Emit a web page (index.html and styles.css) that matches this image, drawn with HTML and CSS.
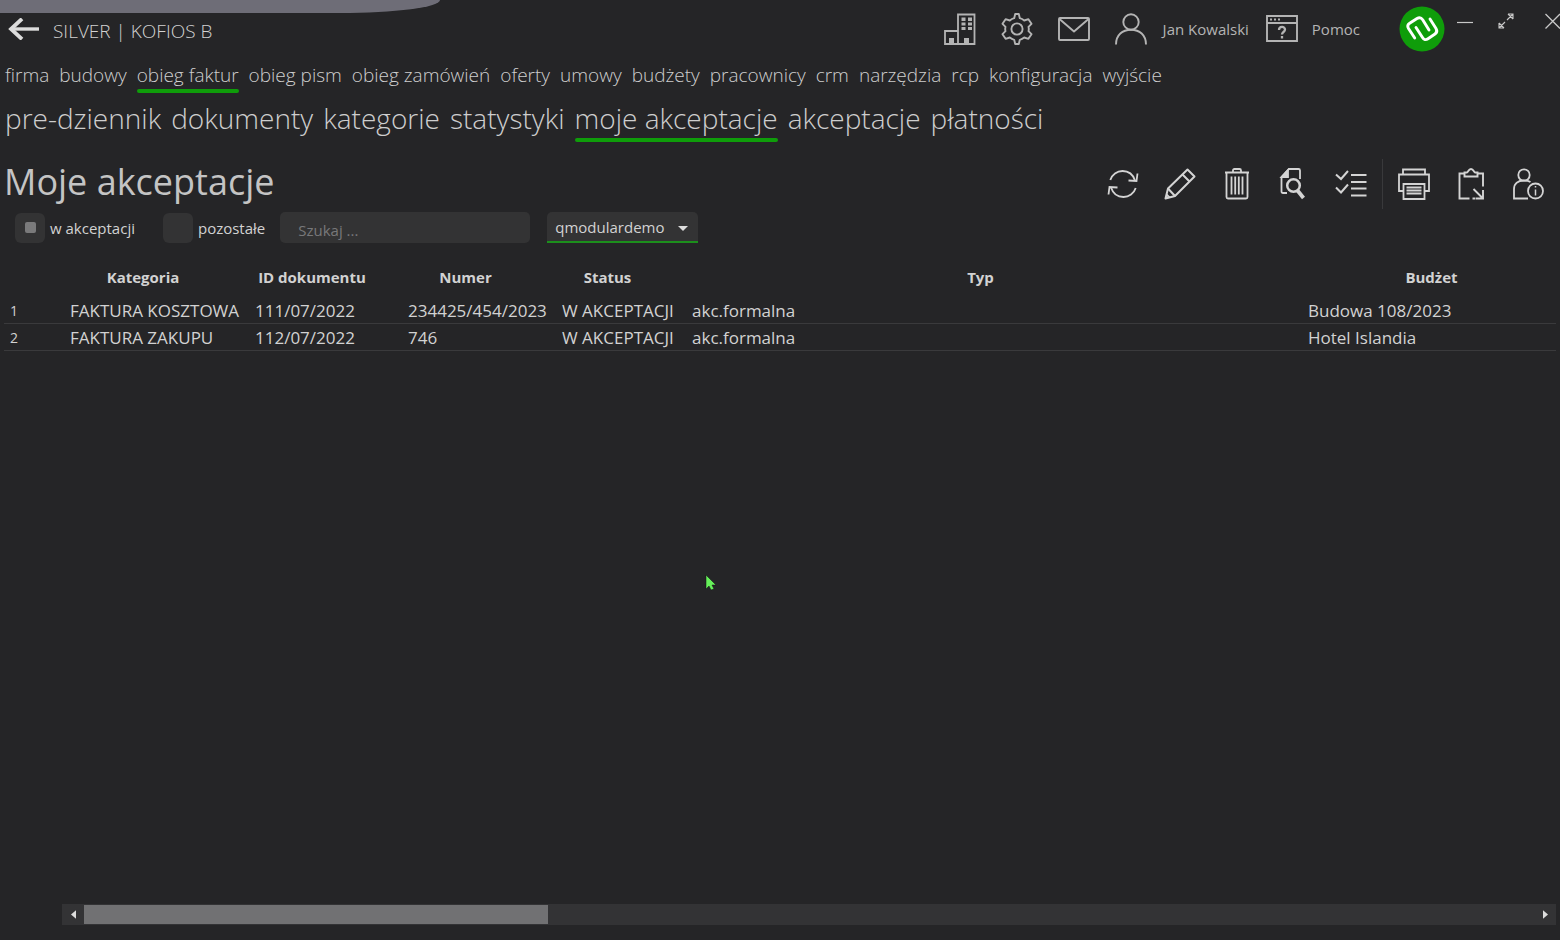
FILE: index.html
```html
<!DOCTYPE html>
<html lang="pl">
<head>
    <meta charset="UTF-8">
    <meta name="viewport" content="width=device-width, initial-scale=1.0">
    <title>Moje akceptacje</title>
    <link rel="stylesheet" href="styles.css">
</head>
<body>
    <div class="window-tab"></div>

    <!-- górny pasek -->
    <header class="topbar">
        <button class="icon-button back" aria-label="Wstecz">
            <svg width="32" height="22" viewBox="0 0 32 22" fill="none" stroke="#dcdcdc" stroke-width="3.4"><path d="M31 11H3"/><path d="M14 0.8L3 11L14 21.2" stroke-width="3.8"/></svg>
        </button>
        <div class="company">SILVER | KOFIOS B</div>
        <div class="top-actions">
            <button class="icon-button" aria-label="Firma">
                <svg width="32" height="32" viewBox="0 0 32 32" fill="none" stroke="#b4b4b4" stroke-width="1.8"><path d="M14 31V1.5h16.5V31H1V18h13M1 31h30"/><path d="M17.5 4.5h4v3.5h-4zM24 4.5h4v3.5h-4zM17.5 9.5h4v3h-4zM24 9.5h4v3h-4zM17.5 14h4v3h-4zM24 14h4v3h-4zM5 25h5v5.5H5zM20 25h5v5.5h-5z" fill="#b4b4b4" stroke="none"/></svg>
            </button>
            <button class="icon-button" aria-label="Ustawienia">
                <svg width="32" height="32" viewBox="0 0 32 32" fill="none" stroke="#b4b4b4" stroke-width="1.9" stroke-linejoin="round"><circle cx="16" cy="16" r="5.6"/><path d="M14.2 1h3.6l1 4.2c1.7.4 3.1 1.2 4.4 2.3l4.2-1.3 3.1 4.6-3 3c.4 1.5.4 2.9 0 4.4l3 3-3.1 4.6-4.2-1.3c-1.3 1.1-2.7 1.9-4.4 2.3l-1 4.2h-3.6l-1-4.2c-1.7-.4-3.1-1.2-4.4-2.3l-4.2 1.3-3.1-4.6 3-3c-.4-1.5-.4-2.9 0-4.4l-3-3 3.1-4.6 4.2 1.3c1.3-1.1 2.7-1.9 4.4-2.3z"/></svg>
            </button>
            <button class="icon-button" aria-label="Wiadomości">
                <svg width="32" height="32" viewBox="0 0 32 32" fill="none" stroke="#b4b4b4" stroke-width="1.9" stroke-linejoin="round"><rect x="1" y="5" width="30" height="22" rx="1"/><path d="M1.5 6L16 18.5 30.5 6"/></svg>
            </button>
            <button class="icon-button user">
                <svg width="32" height="32" viewBox="0 0 32 32" fill="none" stroke="#b4b4b4" stroke-width="1.9"><circle cx="16" cy="9" r="7.7"/><path d="M1 31.5C1 22 7.5 16.7 16 16.7S31 22 31 31.5"/></svg>
                <span>Jan Kowalski</span>
            </button>
            <button class="icon-button help">
                <svg width="32" height="32" viewBox="0 0 32 32" fill="none" stroke="#b4b4b4" stroke-width="1.9"><path d="M1 3h30v25H1zM1 10h30"/><path d="M4 6.5h2M8 6.5h2M12 6.5h2" stroke-width="2"/><path d="M13 17c0-4 6-4 6-.5 0 2.5-3 2.5-3 5M16 23v2.5" stroke-width="2.3"/></svg>
                <span>Pomoc</span>
            </button>
        </div>
        <svg class="logo" width="46" height="46" viewBox="0 0 46 46" fill="none" stroke="#fff" stroke-width="2.9" stroke-linecap="round" stroke-linejoin="round"><circle cx="23" cy="23" r="22.5" fill="#0f9d0a" stroke="none"/><path d="M15.7 32L9.5 22.5Q7.5 19 11 17L18 12.5Q21.5 10.5 23.7 13.7L30 24"/><path d="M17 21.5L23.5 31.5Q25.5 35 29 32.7L36 28Q39 26 37 22.5L31 13"/></svg>
        <div class="window-controls">
            <button class="icon-button" aria-label="Minimalizuj">
                <svg width="16" height="16" viewBox="0 0 16 16" stroke="#c8c8c8" stroke-width="1.2"><path d="M0 9.5h16"/></svg>
            </button>
            <button class="icon-button" aria-label="Przywróć">
                <svg width="16" height="16" viewBox="0 0 16 16" fill="none" stroke="#c8c8c8" stroke-width="1.1"><path d="M10 1h5v5M15 1L9 7M1 10v5h5M1 15l6-6M10 1l5 5M1 10l5 5"/></svg>
            </button>
            <button class="icon-button" aria-label="Zamknij">
                <svg width="16" height="16" viewBox="0 0 16 16" stroke="#c8c8c8" stroke-width="1.3"><path d="M1.5 1L16 15.5M16 1L1.5 15.5"/></svg>
            </button>
        </div>
    </header>

    <!-- menu główne -->
    <nav class="menu">
        <a href="#">firma</a>
        <a href="#">budowy</a>
        <a href="#" class="active">obieg faktur</a>
        <a href="#">obieg pism</a>
        <a href="#">obieg zamówień</a>
        <a href="#">oferty</a>
        <a href="#">umowy</a>
        <a href="#">budżety</a>
        <a href="#">pracownicy</a>
        <a href="#">crm</a>
        <a href="#">narzędzia</a>
        <a href="#">rcp</a>
        <a href="#">konfiguracja</a>
        <a href="#">wyjście</a>
    </nav>
    <nav class="menu submenu">
        <a href="#">pre-dziennik</a>
        <a href="#">dokumenty</a>
        <a href="#">kategorie</a>
        <a href="#">statystyki</a>
        <a href="#" class="active">moje akceptacje</a>
        <a href="#">akceptacje</a>
        <a href="#">płatności</a>
    </nav>

    <div class="title-row">
        <h1>Moje akceptacje</h1>
        <div class="toolbar">
            <button class="icon-button" aria-label="Odśwież">
                <svg width="32" height="32" viewBox="0 0 32 32" fill="none" stroke="#d4d4d4" stroke-width="1.8"><path d="M3.3 12C5 6.5 10 3 15.5 3c6 0 10.5 3.5 12.5 9.5M28.7 20C27 25.5 22 29 16.5 29c-6 0-10.5-3.5-12.5-9.5"/><path d="M21.5 12.5l8 .5 1-7.5M10.5 19.5l-8-.5-1 7.5"/></svg>
            </button>
            <button class="icon-button" aria-label="Edytuj">
                <svg width="32" height="32" viewBox="0 0 32 32" fill="none" stroke="#d4d4d4" stroke-width="2" stroke-linejoin="round"><path d="M1.5 30.5L4 20.5 23.5 1.5l7 7L11 28z"/><path d="M4 20.5l7 7.5M18.5 6.5l7 7M2.5 26.5l3 3"/></svg>
            </button>
            <button class="icon-button" aria-label="Usuń">
                <svg width="32" height="32" viewBox="0 0 32 32" fill="none" stroke="#d4d4d4" stroke-width="1.8"><path d="M4 4.5h24M12 4V2.5c0-1 .5-1.5 1.5-1.5h5c1 0 1.5.5 1.5 1.5V4M5.5 5v24c0 1 .5 1.5 1.5 1.5h18c1 0 1.5-.5 1.5-1.5V5M10.5 8.5v18M14.2 8.5v18M17.8 8.5v18M21.5 8.5v18"/></svg>
            </button>
            <button class="icon-button" aria-label="Podgląd">
                <svg width="32" height="32" viewBox="0 0 32 32" fill="none" stroke="#d4d4d4" stroke-width="1.8"><path d="M9 25H5c-1 0-1.5-.5-1.5-1.5V9L11 1h9.5c1 0 1.5.5 1.5 1.5V11"/><path d="M3.5 9H10V2z" fill="#d4d4d4"/><circle cx="15.5" cy="17.5" r="6.3" stroke-width="2.5"/><path d="M19.5 22.5l6 7.5" stroke-width="3.8"/></svg>
            </button>
            <button class="icon-button" aria-label="Akceptuj">
                <svg width="32" height="32" viewBox="0 0 32 32" fill="none" stroke="#d4d4d4" stroke-width="2"><path d="M1 6.5l5 4.5 7-8M1 19.5l5 5 7-8M16 7h15.5M16 14h15.5M16 20.5h15.5M16 27.5h15.5"/></svg>
            </button>
            <span class="separator"></span>
            <button class="icon-button" aria-label="Drukuj">
                <svg width="32" height="32" viewBox="0 0 32 32" fill="none" stroke="#d4d4d4" stroke-width="1.8"><path d="M5 6.5V1.5h22v5M5 23H1V6.5h30V23h-4"/><path d="M5.5 16h21v15h-21zM8.5 19.5h15M8.5 22.5h15M8.5 25.5h15"/></svg>
            </button>
            <button class="icon-button" aria-label="Schowek">
                <svg width="32" height="32" viewBox="0 0 32 32" fill="none" stroke="#d4d4d4" stroke-width="1.9"><path d="M9 5.5H4.5v25h10M17.5 30.5H20M23 5.5h5v13"/><path d="M9.5 8.5V4.5H12c1 0 1.500-3.500 4-3.500s3 3.500 4 3.500h2.500v4z"/><path d="M18.5 21l8.5 8.500M28 22v8.500h-7.500"/></svg>
            </button>
            <button class="icon-button" aria-label="Informacje o użytkowniku">
                <svg width="32" height="32" viewBox="0 0 32 32" fill="none" stroke="#d4d4d4" stroke-width="1.8"><circle cx="12" cy="7" r="5.7"/><path d="M16 30.5H2V21c0-5.500 4-8.500 10-8.500 2.500 0 5 .5 6.500 1.500"/><circle cx="23.5" cy="23" r="7.5"/><path d="M23.5 21.5v6M23.5 18v1.5" stroke-width="1.5"/></svg>
            </button>
        </div>
    </div>

    <form class="filters">
        <label class="check"><input type="checkbox" checked>w akceptacji</label>
        <label class="check"><input type="checkbox">pozostałe</label>
        <input class="search" type="text" placeholder="Szukaj ..." aria-label="Szukaj">
        <div class="select-box">
            <select aria-label="Użytkownik">
                <option>qmodulardemo</option>
            </select>
        </div>
    </form>

    <main class="grid">
        <table>
            <colgroup>
                <col class="col-lp">
                <col class="col-kategoria">
                <col class="col-id">
                <col class="col-numer">
                <col class="col-status">
                <col class="col-typ">
                <col class="col-budzet">
            </colgroup>
            <thead>
                <tr>
                    <th></th>
                    <th>Kategoria</th>
                    <th>ID dokumentu</th>
                    <th>Numer</th>
                    <th>Status</th>
                    <th>Typ</th>
                    <th>Budżet</th>
                </tr>
            </thead>
            <tbody>
                <tr>
                    <td class="lp">1</td>
                    <td>FAKTURA KOSZTOWA</td>
                    <td>111/07/2022</td>
                    <td>234425/454/2023</td>
                    <td>W AKCEPTACJI</td>
                    <td>akc.formalna</td>
                    <td>Budowa 108/2023</td>
                </tr>
                <tr>
                    <td class="lp">2</td>
                    <td>FAKTURA ZAKUPU</td>
                    <td>112/07/2022</td>
                    <td>746</td>
                    <td>W AKCEPTACJI</td>
                    <td>akc.formalna</td>
                    <td>Hotel Islandia</td>
                </tr>
            </tbody>
        </table>
    </main>

    <div class="scrollbar">
        <button class="scroll-arrow" aria-label="Przewiń w lewo"><svg width="5" height="9" viewBox="0 0 6 10"><path d="M6 0v10L0 5z" fill="#dcdcdc"/></svg></button>
        <div class="scroll-track"><div class="scroll-thumb"></div></div>
        <button class="scroll-arrow" aria-label="Przewiń w prawo"><svg width="5" height="9" viewBox="0 0 6 10"><path d="M0 0v10l6-5z" fill="#dcdcdc"/></svg></button>
    </div>

    <svg class="cursor" width="12" height="18" viewBox="0 0 12 18"><path d="M1 1v14l3-3 2 4 3-1-2-4h4z" fill="#66f05a" stroke="#111" stroke-width="0.5"/></svg>
</body>
</html>
```
FILE: styles.css
```css
* {
    box-sizing: border-box;
}
body {
    margin: 0;
    min-height: 100vh;
    display: flex;
    flex-direction: column;
    position: relative;
    overflow-x: hidden;
    background: #252527;
    color: #d2d2d2;
    font-family: "Open Sans", "Noto Sans", sans-serif;
    font-size: 16px;
}
button, input, select {
    font: inherit;
    color: inherit;
}
.window-tab {
    position: absolute;
    top: 0;
    left: 0;
    width: 440px;
    height: 13px;
    background: #6e6d77;
    border-bottom-right-radius: 100px 13px;
}

/* topbar */
.topbar {
    display: flex;
    align-items: center;
    height: 57px;
    padding-left: 8px;
}
.icon-button {
    display: flex;
    align-items: center;
    padding: 0;
    border: none;
    background: none;
    color: #b4b4b4;
    cursor: pointer;
}
.icon-button svg {
    display: block;
}
.company {
    margin-left: 13px;
    padding-top: 4px;
    font-size: 19px;
    font-weight: 300;
    white-space: nowrap;
}
.top-actions {
    display: flex;
    align-items: center;
    gap: 25px;
    margin-left: auto;
}
.user,
.help {
    font-size: 15px;
    white-space: nowrap;
}
.user {
    gap: 16px;
}
.help {
    gap: 14px;
    margin-left: -8px;
}
.logo {
    margin-left: 39px;
}
.window-controls {
    display: flex;
    gap: 25px;
    margin-left: 12px;
    padding-bottom: 16px;
}
.window-controls .icon-button:last-child {
    margin-left: 5px;
}

/* menu */
.menu {
    display: flex;
    gap: 10px;
    padding: 5px 5px 0;
    font-size: 19px;
    font-weight: 300;
    line-height: 27px;
}
.menu a {
    color: #cecece;
    text-decoration: none;
    white-space: nowrap;
    border-bottom: 4px solid transparent;
}
.menu .active::after {
    content: "";
    display: block;
    height: 4px;
    margin-bottom: -4px;
    border-radius: 2px;
    background: #0f9d0a;
}
.submenu {
    padding-top: 5px;
    font-size: 28px;
    line-height: 40px;
}

/* tytuł i narzędzia */
.title-row {
    display: flex;
    align-items: center;
    justify-content: space-between;
    height: 54px;
    margin-top: 15px;
    padding: 0 16px 0 4px;
}
h1 {
    margin: 0;
    padding-bottom: 4px;
    color: #c4c4c4;
    font-size: 36px;
    font-weight: 400;
    line-height: 48px;
}
.toolbar {
    display: flex;
    align-items: center;
    gap: 25px;
}
.separator {
    width: 1px;
    height: 50px;
    margin: 0 -10px;
    background: #39393b;
}

/* filtry */
.filters {
    display: flex;
    align-items: center;
    height: 31px;
    margin-top: 1px;
    padding-left: 15px;
}
.check {
    display: flex;
    align-items: center;
    gap: 5px;
    margin-right: 28px;
    font-size: 15px;
}
.check + .search {
    margin-left: -13px;
}
.check input {
    display: grid;
    place-items: center;
    appearance: none;
    width: 30px;
    height: 30px;
    margin: 0;
    border-radius: 6px;
    background: #333334;
}
.check input:checked::before {
    content: "";
    width: 11px;
    height: 11px;
    border-radius: 2px;
    background: #7a7a7b;
}
.search {
    width: 250px;
    height: 31px;
    padding: 4px 18px 0;
    border: none;
    border-radius: 5px;
    background: #333334;
    font-size: 15px;
}
.search::placeholder {
    color: #78787a;
}
.select-box {
    position: relative;
    margin-left: 17px;
}
.select-box select {
    appearance: none;
    width: 151px;
    height: 31px;
    padding: 1px 8px 0;
    border: none;
    border-bottom: 2px solid #1c8f1c;
    border-radius: 5px 5px 0 0;
    background: #333334;
    font-size: 15px;
}
.select-box::after {
    content: "";
    position: absolute;
    top: 14px;
    right: 10px;
    border: 5px solid transparent;
    border-top-color: #dcdcdc;
    border-bottom: none;
    pointer-events: none;
}

/* tabela */
.grid {
    flex: 1;
    padding: 14px 4px 0;
}
table {
    width: 100%;
    table-layout: fixed;
    border-spacing: 0;
}
.col-lp { width: 59px; }
.col-kategoria { width: 185px; }
.col-id { width: 153px; }
.col-numer { width: 154px; }
.col-status { width: 130px; }
.col-budzet { width: 255px; }
th {
    height: 40px;
    padding: 0 25px 0 0;
    font-size: 15px;
    font-weight: 700;
    white-space: nowrap;
}
th:last-child {
    padding: 0 0 0 6px;
}
td {
    height: 27px;
    padding: 1px 0 0 7px;
    border-bottom: 1px solid #3a3a3c;
    font-size: 17px;
    line-height: 25px;
    white-space: nowrap;
}
.lp {
    padding: 0 0 0 6px;
    font-size: 14px;
}

/* pasek przewijania */
.scrollbar {
    display: flex;
    height: 21px;
    margin: 0 4px 15px 62px;
    background: #333335;
}
.scroll-arrow {
    display: flex;
    align-items: center;
    justify-content: center;
    width: 22px;
    padding: 0;
    border: none;
    background: none;
}
.scroll-track {
    flex: 1;
    padding: 1px 0;
}
.scroll-thumb {
    width: 32%;
    height: 19px;
    background: #717173;
}

.cursor {
    position: absolute;
    left: 705px;
    top: 574px;
}
```
